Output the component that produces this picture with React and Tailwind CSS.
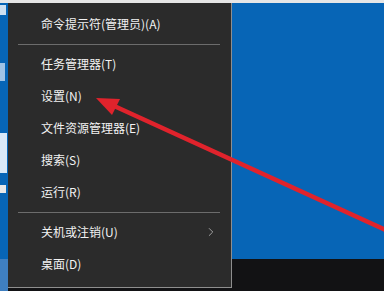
import { ChevronRight } from 'lucide-react';

const groups = [
  ['命令提示符(管理员)(A)'],
  ['任务管理器(T)', '设置(N)', '文件资源管理器(E)', '搜索(S)', '运行(R)'],
  ['关机或注销(U)', '桌面(D)'],
];

function MenuItem({ label }) {
  return (
    <div className="h-[32px] flex items-center justify-between pl-[33px] pr-[13px] text-[12px] text-[#f2f2f2]">
      <span>{label}</span>
      {label.startsWith('关机') && <ChevronRight size={14} strokeWidth={1.2} className="text-[#cfcfcf]" />}
    </div>
  );
}

export default function App() {
  return (
    <div
      className="relative w-[384px] h-[291px] overflow-hidden bg-[#e6e6e6]"
      style={{ fontFamily: '"Noto Sans CJK SC", "Microsoft YaHei", sans-serif' }}
    >
      {/* desktop + taskbar */}
      <div className="mt-[3px] h-[256px] bg-[#0765b6] flex">
        <div className="w-[8px] flex flex-col pt-[2px]">
          <div className="w-[6px] h-[10px] bg-[#cfe0f0]" />
          <div className="w-[5px] h-[18px] mt-[48px] bg-[#9fc3e6]" />
          <div className="w-[7px] h-[40px] mt-[52px] bg-[#d9e8f7]" />
          <div className="w-[6px] h-[8px] mt-[12px] bg-[#e8e8e8]" />
        </div>
      </div>
      <div className="h-[32px] bg-[#121214]">
        <div className="w-[8px] h-full bg-[#3f7fc0]" />
      </div>

      {/* context menu */}
      <div className="absolute left-[8px] top-[3px] w-[224px] h-[285px] bg-[#2b2b2b] border-r border-b border-[#8e8e8e] pt-[5px]">
        {groups.map((g, i) => (
          <div key={i}>
            {i > 0 && (
              <div className="h-[8px] flex items-center">
                <div className="ml-[10px] mr-[11px] flex-1 h-px bg-[#6c6c6c]" />
              </div>
            )}
            {g.map((label) => (
              <MenuItem key={label} label={label} />
            ))}
          </div>
        ))}
      </div>

      {/* red arrow */}
      <svg className="absolute inset-0" width="384" height="291" viewBox="0 0 384 291">
        <line x1="390" y1="232" x2="112" y2="105" stroke="#e0232c" strokeWidth="4.5" />
        <polygon points="96,98 112,115 120,99" fill="#e0232c" />
      </svg>
    </div>
  );
}
